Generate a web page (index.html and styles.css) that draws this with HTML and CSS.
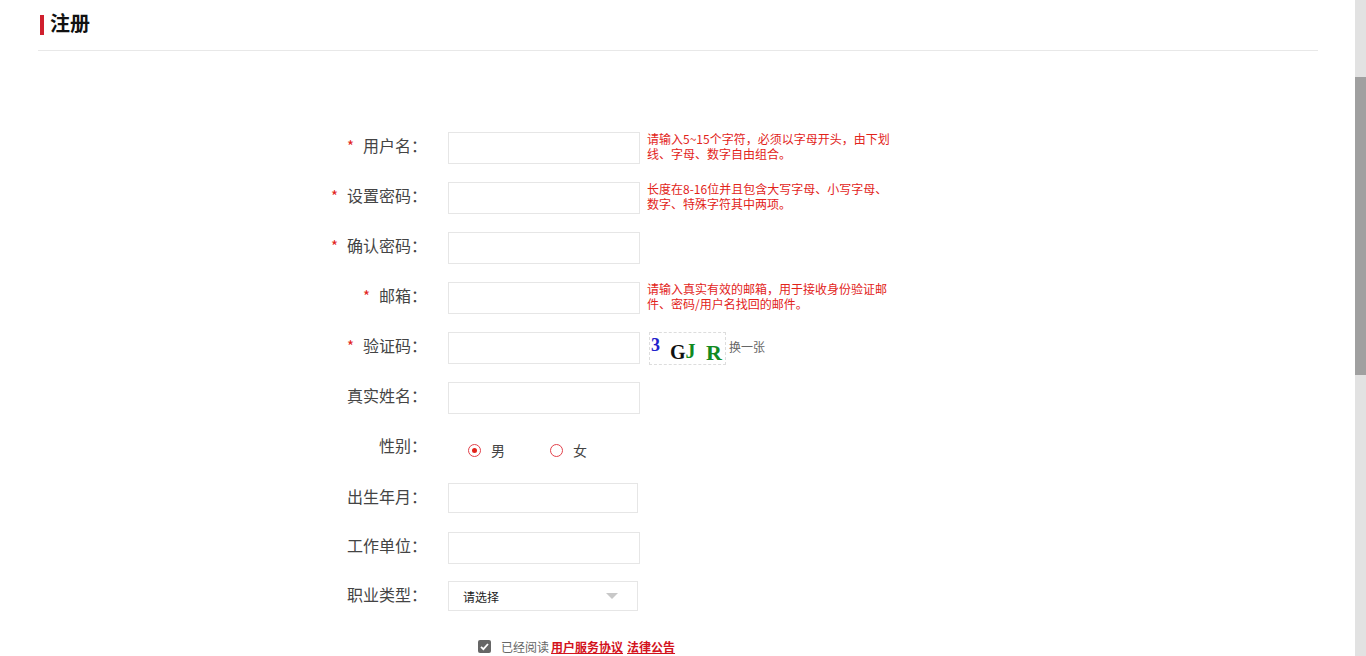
FILE: index.html
```html
<!DOCTYPE html>
<html lang="zh-CN">
<head>
<meta charset="utf-8">
<title>注册</title>
<link rel="stylesheet" href="styles.css">
</head>
<body>
<div class="page">
  <main class="content">
    <header class="head"><h1 class="title">注册</h1></header>
    <form class="form">
      <div class="row">
        <label class="label"><span class="req">*</span>用户名：</label>
        <input class="field" type="text">
        <p class="hint">请输入5~15个字符，必须以字母开头，由下划线、字母、数字自由组合。</p>
      </div>
      <div class="row">
        <label class="label"><span class="req">*</span>设置密码：</label>
        <input class="field" type="text">
        <p class="hint">长度在8-16位并且包含大写字母、小写字母、数字、特殊字符其中两项。</p>
      </div>
      <div class="row">
        <label class="label"><span class="req">*</span>确认密码：</label>
        <input class="field" type="text">
      </div>
      <div class="row">
        <label class="label"><span class="req">*</span>邮箱：</label>
        <input class="field" type="text">
        <p class="hint">请输入真实有效的邮箱，用于接收身份验证邮件、密码/用户名找回的邮件。</p>
      </div>
      <div class="row">
        <label class="label"><span class="req">*</span>验证码：</label>
        <input class="field" type="text">
        <div class="captcha" aria-label="验证码图片">
          <svg class="captcha-text" width="75" height="31" viewBox="0 0 75 31">
            <text x="1" y="18" class="c-blue">3</text>
            <text x="20" y="26" class="c-black">G</text>
            <text x="35.5" y="25" class="c-green c-thin">J</text>
            <text x="56" y="27" class="c-green">R</text>
          </svg>
        </div>
        <span class="swap">换一张</span>
      </div>
      <div class="row">
        <label class="label">真实姓名：</label>
        <input class="field" type="text">
      </div>
      <div class="row row-radio">
        <label class="label">性别：</label>
        <div class="radios">
          <span class="radio radio-on"></span><span class="radio-text">男</span>
          <span class="radio"></span><span class="radio-text">女</span>
        </div>
      </div>
      <div class="row row-short">
        <label class="label">出生年月：</label>
        <input class="field field-short" type="text">
      </div>
      <div class="row row-work">
        <label class="label">工作单位：</label>
        <input class="field" type="text">
      </div>
      <div class="row row-short">
        <label class="label">职业类型：</label>
        <div class="select"><span>请选择</span><i class="caret"></i></div>
      </div>
      <div class="agree">
        <span class="check">
          <svg width="13" height="13" viewBox="0 0 13 13"><path d="M3 6.8 5.4 9.2 10 4" fill="none" stroke="#fff" stroke-width="1.8"/></svg>
        </span>
        <span class="agree-text">已经阅读</span>
        <a class="agree-link" href="#">用户服务协议</a>
        <a class="agree-link" href="#">法律公告</a>
      </div>
    </form>
  </main>
  <div class="scrollbar"><div class="thumb"></div></div>
</div>
</body>
</html>
```

FILE: styles.css
```css
* { box-sizing: border-box; }
html, body { margin: 0; height: 656px; overflow: hidden; background: #fff; }
body { font-family: "Noto Sans CJK SC", "Liberation Sans", sans-serif; color: #333; }
.page { display: flex; height: 656px; }
.content { flex: 1; min-width: 0; padding: 0 37px 0 38px; }
.head { height: 51px; border-bottom: 1px solid #e8e8e8; padding: 15px 0 0 2px; }
.title {
  margin: 0; height: 20px; padding-left: 6px; border-left: 4px solid #d0202e;
  font-size: 20px; line-height: 16px; font-weight: 700; color: #111;
}
.form { display: flex; flex-direction: column; gap: 18px; margin-top: 81px; padding-left: 282px; }
.row { display: flex; align-items: flex-start; height: 32px; }
.row-radio { height: 33px; }
.row-short { height: 31px; }
.row-work { margin-bottom: -1px; }
.label {
  width: 128px; padding-right: 21px; height: 26px; line-height: 26px; text-align: right;
  font-size: 16px; color: #444; white-space: nowrap;
}
.req { color: #e2231a; margin-right: 9px; font-size: 15px; }
.field { width: 192px; height: 32px; border: 1px solid #e6e6e6; background: #fff; padding: 0 10px; outline: 0; }
.field-short { width: 190px; height: 30px; }
.hint {
  margin: -1px 0 0 7px; width: 250px; font-size: 12px; line-height: 15px; color: #e2231a;
}
.captcha {
  width: 77px; height: 33px; margin-left: 9px; border: 1px dashed #ddd; background: #fff;
}
.captcha-text { display: block; font-family: "Liberation Serif", serif; font-weight: 700; font-size: 22px; }
.c-blue { fill: #2222cc; font-size: 18px; }
.c-black { fill: #111; font-size: 20px; }
.c-green { fill: #118a22; }
.c-thin { font-size: 20px; }
.swap { margin-left: 3px; font-size: 12px; line-height: 29px; color: #666; }
.radios { display: flex; align-items: center; height: 36px; padding-left: 20px; }
.radio {
  width: 13px; height: 13px; border: 1px solid #e2404a; border-radius: 50%; background: #fff;
  display: flex; align-items: center; justify-content: center;
}
.radio-on::after { content: ""; width: 5px; height: 5px; border-radius: 50%; background: #e2231a; }
.radio-text { width: 69px; padding-left: 10px; font-size: 14px; color: #444; }
.select {
  width: 190px; height: 30px; border: 1px solid #e6e6e6; padding: 0 19px 0 14px;
  display: flex; align-items: center; justify-content: space-between; font-size: 12px; color: #222;
}
.caret { width: 0; height: 0; border: 6px solid transparent; border-top: 6px solid #c8c8c8; border-bottom: 0; }
.agree { display: flex; align-items: center; height: 14px; margin-top: 9px; padding-left: 196px; margin-left: -38px; font-size: 12px; }
.check { width: 13px; height: 13px; border-radius: 2px; background: #666; margin-right: 10px; display: block; }
.check svg { display: block; }
.agree-text { color: #666; margin-right: 2px; }
.agree-link { color: #d3131c; font-weight: 700; text-decoration: underline; margin-right: 4px; }
.scrollbar { width: 11px; flex: none; background: #e2e2e2; padding-top: 77px; }
.thumb { height: 298px; background: #a0a0a0; }
```
